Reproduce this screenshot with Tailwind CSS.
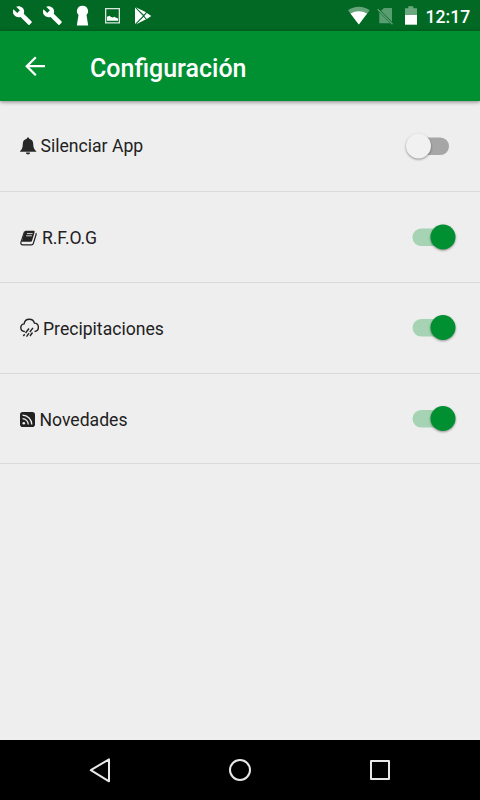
<!DOCTYPE html>
<html lang="es">
<head>
<meta charset="utf-8">
<title>Configuración</title>
<script src="https://cdn.jsdelivr.net/npm/@tailwindcss/browser@4"></script>
</head>
<body class="w-[480px] h-[800px] overflow-hidden bg-[#eeeeee] font-[Roboto,sans-serif] flex flex-col">
  <div class="h-[31px] shrink-0 bg-[#016924] flex items-center justify-between text-white">
    <svg class="w-[160px] h-[31px]" viewBox="0 0 160 31" fill="#fff">
      <path id="w" transform="translate(12.1 5.2) scale(.86)" d="M22.7 19l-9.1-9.1c.9-2.3.4-5-1.5-6.9-2-2-5-2.4-7.4-1.3L9 6 6 9 1.6 4.7C.4 7.100.9 10.100 2.900 12.100c1.900 1.900 4.600 2.400 6.900 1.500l9.100 9.100c.4.4 1 .4 1.400 0l2.300-2.300c.5-.4.5-1.100.1-1.400z"/>
      <use href="#w" x="30"/>
      <path d="M82.500 5.700a5.400 5.400 0 0 1 4 9.200l1.700 10.500H76.800l1.700-10.500A5.400 5.400 0 0 1 82.500 5.700z"/>
      <path fill-rule="evenodd" d="M105 8h15v15.500H105zM106.300 9.300v12.900h12.400V9.300z" opacity=".85"/>
      <path d="M107 20.800v-4l2.500-1 1.500 1.200 2 .5 1.500-.8 1 .7 2.500 1.200v2.200z"/>
      <path d="M135 7.500l8.300 8.300-8.300 8.300z"/>
      <path d="M135.800 7.200l10.300 5-2.300 2.600zM146.800 12.900l4.500 3-4.500 3-2.600-3zM135.800 24.500l8-7.700 2.300 2.500z"/>
      <path d="M136 8l10 11M136 24l10-11" stroke="#016924" stroke-width=".6"/>
    </svg>
    <div class="flex items-center">
      <svg class="w-[80px] h-[31px]" viewBox="340 0 80 31" fill="#fff">
        <path opacity=".4" d="M348 10.300C354.200 5.500 363.500 5.500 369.700 10.300L358.800 24.500z"/>
        <path d="M350.500 13.500Q358.800 8.900 367.100 13.500L358.800 24.500z"/>
        <g opacity=".35"><path d="M384 8h8v13.800L381 10.800zM379.300 12.200L390 23.300H379.300z"/><path d="M377.700 9.200L392.500 24.200" stroke="#fff" stroke-width="1.500"/></g>
        <path opacity=".42" d="M405 8.200h3.300V6.300h5v1.900h3.700V15H405z"/>
        <path d="M405 15h12v9.700H405z"/>
      </svg>
      <span class="w-[60px] pl-[5.500px] pt-[3px] text-[17.600px] font-medium leading-[28px] whitespace-nowrap">12:17</span>
    </div>
  </div>
  <header class="relative h-[70px] shrink-0 bg-[#009031] flex items-center text-white shadow-[0_1px_4px_rgba(0,0,0,.45)]">
    <svg class="ml-[25px] w-[21px] h-[20px]" viewBox="0 0 21 20" fill="none" stroke="#fff" stroke-width="2.300"><path d="M20 10.200H2.200M10.800 1.200L1.800 10.200l9 9"/></svg>
    <h1 class="ml-[44px] mt-[5px] text-[25px] font-medium leading-[30px]">Configuración</h1>
  </header>
  <main class="flex-1 text-[17.600px] leading-[24px] text-[#212121]">
    <section class="h-[91px] border-b border-[#dadada] flex items-center pl-5 pr-[20px]">
      <svg class="w-[17px] h-[18px]" viewBox="0 0 17 18" fill="#282828"><path d="M8 .5c.8 0 1.200.5 1.200 1.300 2.700.6 4 2.500 4 5 0 4 1.300 6 3.100 7.400v.6H0v-.6c1.700-1.400 2.800-3.400 2.800-7.400 0-2.500 1.300-4.400 4-5C6.800 1 7.200.5 8 .5zM5.900 15.400h4.200c0 1.200-.9 2-2.100 2s-2.100-.8-2.100-2z"/></svg>
      <span class="ml-[3.500px]">Silenciar App</span>
      <svg class="ml-auto w-[60px] h-[36px]" viewBox="0 0 60 36"><rect x="12.500" y="9.500" width="36.500" height="17.500" rx="8.750" fill="#a6a6a6"/><circle cx="18.500" cy="18" r="12.500" fill="#f1f1f1" class="drop-shadow-[0_1px_1px_rgba(0,0,0,.4)]"/></svg>
    </section>
    <section class="h-[91px] border-b border-[#dadada] flex items-center pl-5 pr-[20px]">
      <svg class="w-[18px] h-[16px] mt-px" viewBox="0 0 18 16"><path d="M5.800.8h7.800c.9 0 1.300.6 1 1.500l-2.500 8.300c-.3.900-.7 1.200-1.600 1.200H1.800L4.400 2c.3-.8.7-1.200 1.400-1.200z" fill="#222"/><path d="M4.500 1.600L.9 12.300c-.4 1.500.5 2.500 1.700 2.500h9c.9 0 1.400-.4 1.700-1.300l2.800-9c.2-.6 0-1-.4-1.300" fill="none" stroke="#222" stroke-width="1.200"/><path d="M6.900 3.600h5.700M6.200 5.800h5.700" stroke="#eee" stroke-width=".9"/></svg>
      <span class="ml-[4px] mt-[2px] tracking-[-0.1px]">R.F.O.G</span>
      <svg class="ml-auto w-[60px] h-[36px]" viewBox="0 0 60 36"><rect x="12.500" y="9.500" width="36.500" height="17.500" rx="8.750" fill="#a6d3b4"/><circle cx="43" cy="18" r="12.500" fill="#009031" class="drop-shadow-[0_1px_1px_rgba(0,0,0,.4)]"/></svg>
    </section>
    <section class="h-[91px] border-b border-[#dadada] flex items-center pl-5 pr-[20px]">
      <svg class="w-[19px] h-[20px]" viewBox="0 0 19 20" fill="none" stroke="#222" stroke-width="1.400"><path d="M4.800 13.500C2.400 13.300.8 11.700.8 9.700c0-2 1.300-3.500 3.300-3.800C4.500 3 6.500 1.200 9.300 1.200c2.600 0 4.500 1.500 5.100 3.900 2.400.2 4 1.900 4 4.200 0 2.300-1.500 4-3.900 4.200"/><path d="M9 10.500L5.500 15M13 9.800L9.800 14M4.700 16.200L3.300 18M9 15.200L6.500 18.600M12.500 14.500L10 18"/></svg>
      <span class="ml-[4px] mt-[2px]">Precipitaciones</span>
      <svg class="ml-auto w-[60px] h-[36px]" viewBox="0 0 60 36"><rect x="12.500" y="9" width="36.500" height="17.500" rx="8.750" fill="#a6d3b4"/><circle cx="43" cy="17.500" r="12.500" fill="#009031" class="drop-shadow-[0_1px_1px_rgba(0,0,0,.4)]"/></svg>
    </section>
    <section class="h-[90px] border-b border-[#dadada] flex items-center pl-5 pr-[20px]">
      <svg class="w-[15px] h-[15px] mt-px" viewBox="0 0 15 15"><rect width="15" height="15" rx="2.800" fill="#222"/><g fill="none" stroke="#eee" stroke-width="1.300"><path d="M2.500 3.200a9.300 9.300 0 0 1 9.300 9.300M2.500 6.700a5.800 5.800 0 0 1 5.800 5.800"/></g><circle cx="3.800" cy="11.200" r="1.300" fill="#eee"/></svg>
      <span class="ml-[4.500px] mt-[2px]">Novedades</span>
      <svg class="ml-auto w-[60px] h-[36px]" viewBox="0 0 60 36"><rect x="12.500" y="9" width="36.500" height="17.500" rx="8.750" fill="#a6d3b4"/><circle cx="43" cy="17.500" r="12.500" fill="#009031" class="drop-shadow-[0_1px_1px_rgba(0,0,0,.4)]"/></svg>
    </section>
  </main>
  <nav class="h-[60px] shrink-0 bg-black">
    <svg class="w-[480px] h-[60px]" viewBox="0 0 480 60" fill="none" stroke="#e8e8e8" stroke-width="2" stroke-linejoin="round"><path d="M109 19.300v22L90.800 30.200z"/><circle cx="240" cy="30" r="10"/><rect x="371" y="21" width="18" height="18"/></svg>
  </nav>
</body>
</html>
